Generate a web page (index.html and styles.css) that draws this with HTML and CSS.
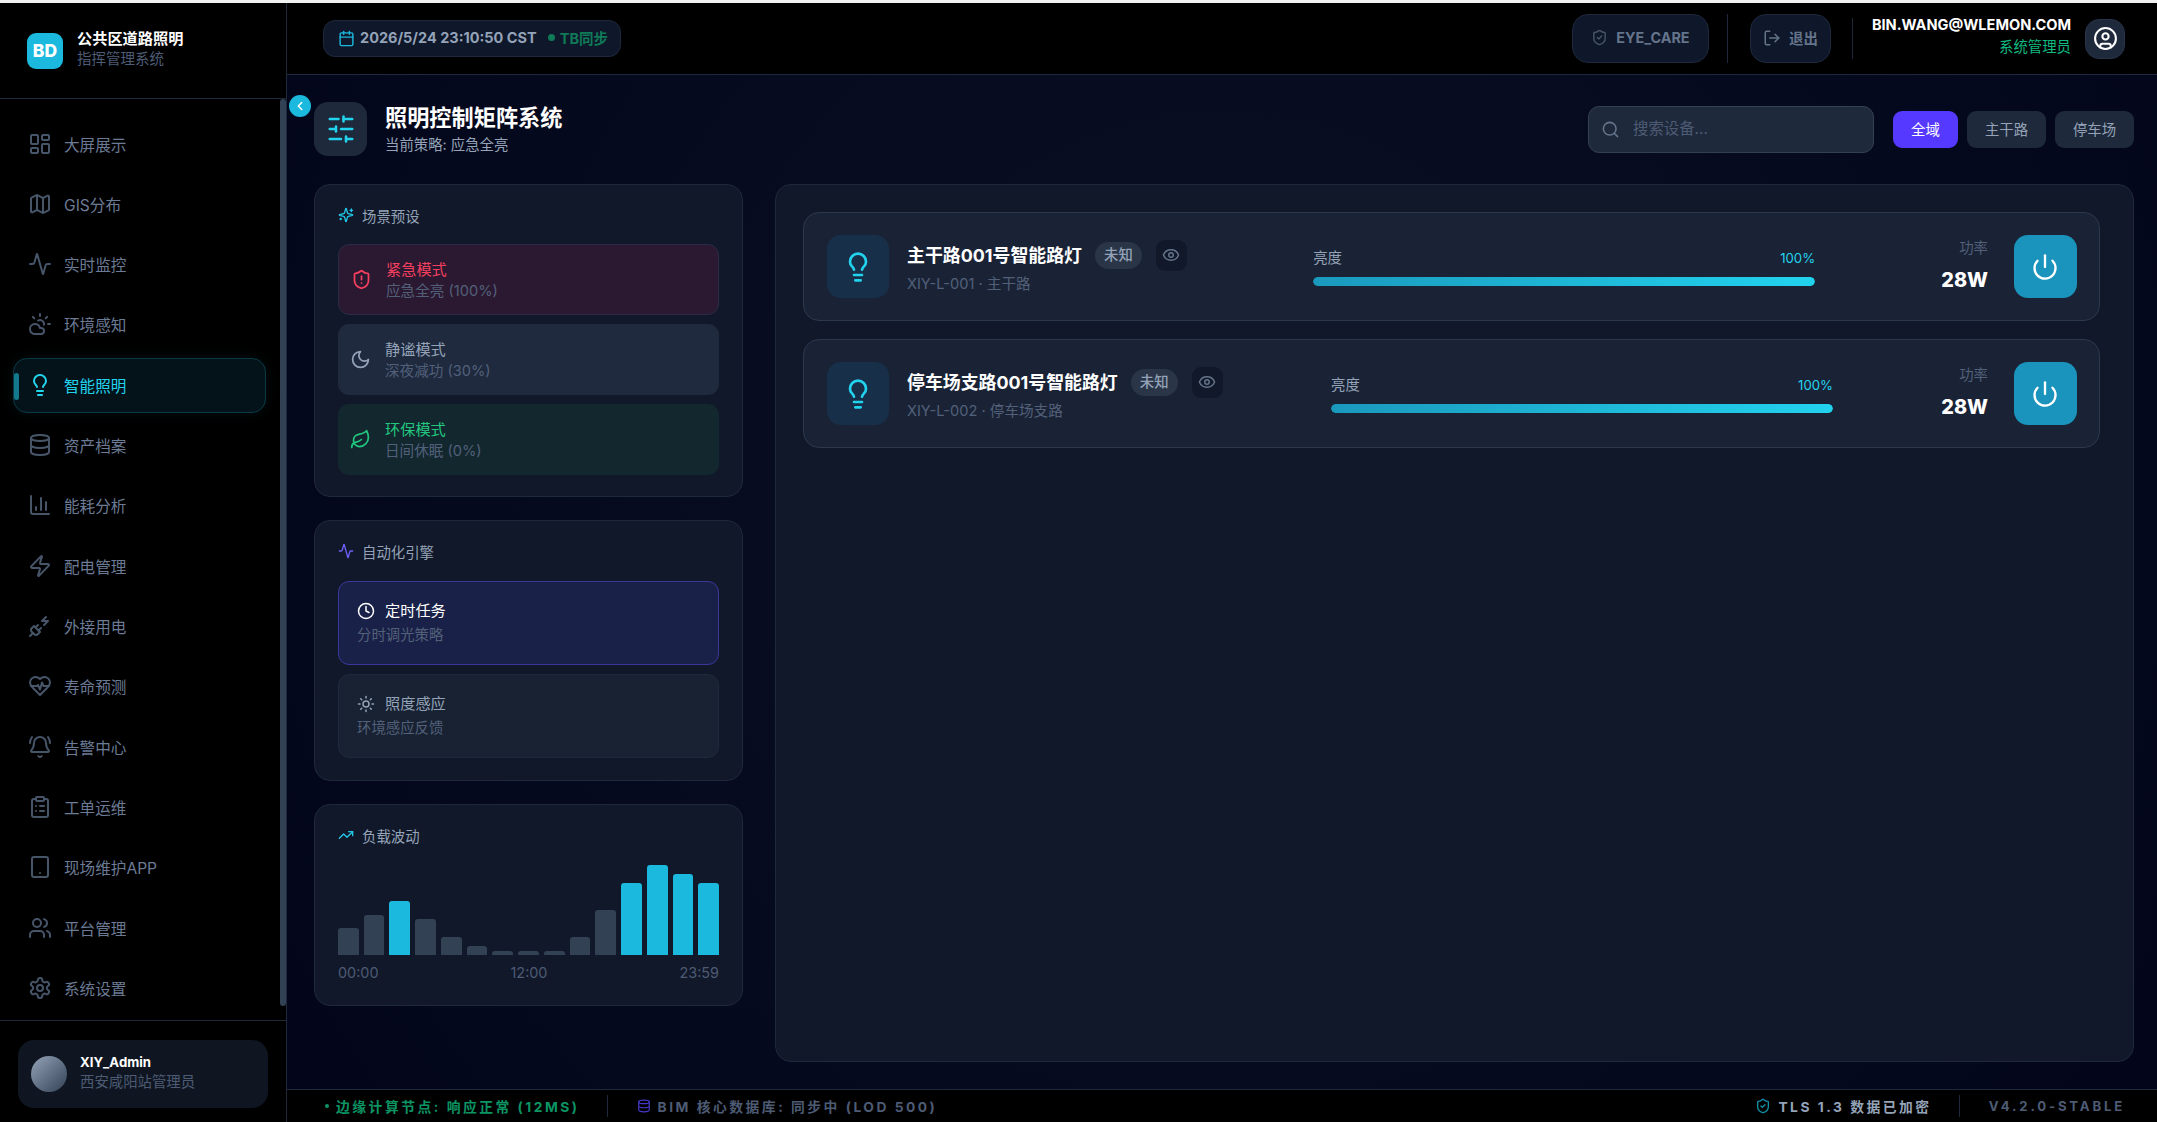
FILE: index.html
```html
<!DOCTYPE html>
<html lang="zh-CN">
<head>
  <meta charset="utf-8"/>
  <meta name="viewport" content="width=device-width, initial-scale=1.0"/>
  <title>公共区道路照明 - 照明控制矩阵系统</title>
  <link rel="stylesheet" href="styles.css">
</head>
<body>
  <svg class="sprite" xmlns="http://www.w3.org/2000/svg">
    <symbol id="i-dashboard" viewBox="0 0 24 24"><rect width="7" height="9" x="3" y="3" rx="1"/><rect width="7" height="5" x="14" y="3" rx="1"/><rect width="7" height="9" x="14" y="12" rx="1"/><rect width="7" height="5" x="3" y="16" rx="1"/></symbol>
    <symbol id="i-map" viewBox="0 0 24 24"><path d="M14.106 5.553a2 2 0 0 0 1.788 0l3.659-1.83A1 1 0 0 1 21 4.619v12.764a1 1 0 0 1-.553.894l-4.553 2.277a2 2 0 0 1-1.788 0l-4.212-2.106a2 2 0 0 0-1.788 0l-3.659 1.83A1 1 0 0 1 3 19.381V6.618a1 1 0 0 1 .553-.894l4.553-2.277a2 2 0 0 1 1.788 0z"/><path d="M15 5.764v15"/><path d="M9 3.236v15"/></symbol>
    <symbol id="i-activity" viewBox="0 0 24 24"><path d="M22 12h-2.48a2 2 0 0 0-1.93 1.46l-2.35 8.36a.25.25 0 0 1-.48 0L9.24 2.18a.25.25 0 0 0-.48 0l-2.35 8.36A2 2 0 0 1 4.49 12H2"/></symbol>
    <symbol id="i-cloud-sun" viewBox="0 0 24 24"><path d="M12 2v2"/><path d="m4.93 4.93 1.41 1.41"/><path d="M20 12h2"/><path d="m19.07 4.93-1.41 1.41"/><path d="M15.947 12.65a4 4 0 0 0-5.925-4.128"/><path d="M13 22H7a5 5 0 1 1 4.9-6H13a3 3 0 0 1 0 6Z"/></symbol>
    <symbol id="i-bulb" viewBox="0 0 24 24"><path d="M15 14c.2-1 .7-1.7 1.5-2.5 1-.9 1.5-2.2 1.5-3.5A6 6 0 0 0 6 8c0 1 .2 2.2 1.5 3.5.7.7 1.3 1.5 1.5 2.5"/><path d="M9 18h6"/><path d="M10 22h4"/></symbol>
    <symbol id="i-database" viewBox="0 0 24 24"><ellipse cx="12" cy="5" rx="9" ry="3"/><path d="M3 5V19A9 3 0 0 0 21 19V5"/><path d="M3 12A9 3 0 0 0 21 12"/></symbol>
    <symbol id="i-chart" viewBox="0 0 24 24"><path d="M3 3v16a2 2 0 0 0 2 2h16"/><path d="M18 17V9"/><path d="M13 17V5"/><path d="M8 17v-3"/></symbol>
    <symbol id="i-zap" viewBox="0 0 24 24"><path d="M4 14a1 1 0 0 1-.78-1.63l9.9-10.2a.5.5 0 0 1 .86.46l-1.92 6.02A1 1 0 0 0 13 10h7a1 1 0 0 1 .78 1.63l-9.9 10.2a.5.5 0 0 1-.86-.46l1.92-6.02A1 1 0 0 0 11 14z"/></symbol>
    <symbol id="i-plug" viewBox="0 0 24 24"><path d="M6.3 20.3a2.4 2.4 0 0 0 3.4 0L12 18l-6-6-2.3 2.3a2.4 2.4 0 0 0 0 3.4Z"/><path d="m2 22 3-3"/><path d="M7.5 13.5 10 11"/><path d="M10.5 16.5 13 14"/><path d="m18 3-4 4h6l-4 4"/></symbol>
    <symbol id="i-heart" viewBox="0 0 24 24"><path d="M19 14c1.49-1.46 3-3.21 3-5.5A5.5 5.5 0 0 0 16.5 3c-1.76 0-3 .5-4.5 2-1.5-1.5-2.74-2-4.5-2A5.5 5.5 0 0 0 2 8.5c0 2.3 1.5 4.05 3 5.5l7 7Z"/><path d="M3.22 12H9.5l.5-1 2 4.5 2-7 1.5 3.5h5.27"/></symbol>
    <symbol id="i-bell" viewBox="0 0 24 24"><path d="M10.268 21a2 2 0 0 0 3.464 0"/><path d="M22 8c0-2.3-.8-4.3-2-6"/><path d="M3.262 15.326A1 1 0 0 0 4 17h16a1 1 0 0 0 .74-1.673C19.41 13.956 18 12.499 18 8A6 6 0 0 0 6 8c0 4.499-1.411 5.956-2.738 7.326"/><path d="M4 2C2.8 3.7 2 5.7 2 8"/></symbol>
    <symbol id="i-clipboard" viewBox="0 0 24 24"><rect width="8" height="4" x="8" y="2" rx="1" ry="1"/><path d="M16 4h2a2 2 0 0 1 2 2v14a2 2 0 0 1-2 2H6a2 2 0 0 1-2-2V6a2 2 0 0 1 2-2h2"/><path d="M12 11h4"/><path d="M12 16h4"/><path d="M8 11h.01"/><path d="M8 16h.01"/></symbol>
    <symbol id="i-tablet" viewBox="0 0 24 24"><rect width="16" height="20" x="4" y="2" rx="2" ry="2"/><line x1="12" x2="12.01" y1="18" y2="18"/></symbol>
    <symbol id="i-users" viewBox="0 0 24 24"><path d="M16 21v-2a4 4 0 0 0-4-4H6a4 4 0 0 0-4 4v2"/><circle cx="9" cy="7" r="4"/><path d="M22 21v-2a4 4 0 0 0-3-3.87"/><path d="M16 3.13a4 4 0 0 1 0 7.75"/></symbol>
    <symbol id="i-settings" viewBox="0 0 24 24"><path d="M12.22 2h-.44a2 2 0 0 0-2 2v.18a2 2 0 0 1-1 1.73l-.43.25a2 2 0 0 1-2 0l-.15-.08a2 2 0 0 0-2.73.73l-.22.38a2 2 0 0 0 .73 2.73l.15.1a2 2 0 0 1 1 1.72v.51a2 2 0 0 1-1 1.74l-.15.09a2 2 0 0 0-.73 2.73l.22.38a2 2 0 0 0 2.73.73l.15-.08a2 2 0 0 1 2 0l.43.25a2 2 0 0 1 1 1.73V20a2 2 0 0 0 2 2h.44a2 2 0 0 0 2-2v-.18a2 2 0 0 1 1-1.73l.43-.25a2 2 0 0 1 2 0l.15.08a2 2 0 0 0 2.73-.73l.22-.39a2 2 0 0 0-.73-2.73l-.15-.08a2 2 0 0 1-1-1.74v-.5a2 2 0 0 1 1-1.74l.15-.09a2 2 0 0 0 .73-2.73l-.22-.38a2 2 0 0 0-2.73-.73l-.15.08a2 2 0 0 1-2 0l-.43-.25a2 2 0 0 1-1-1.73V4a2 2 0 0 0-2-2z"/><circle cx="12" cy="12" r="3"/></symbol>
    <symbol id="i-calendar" viewBox="0 0 24 24"><path d="M8 2v4"/><path d="M16 2v4"/><rect width="18" height="18" x="3" y="4" rx="2"/><path d="M3 10h18"/></symbol>
    <symbol id="i-shield-check" viewBox="0 0 24 24"><path d="M20 13c0 5-3.5 7.5-7.66 8.95a1 1 0 0 1-.67-.01C7.5 20.5 4 18 4 13V6a1 1 0 0 1 1-1c2 0 4.5-1.2 6.24-2.72a1.17 1.17 0 0 1 1.52 0C14.51 3.81 17 5 19 5a1 1 0 0 1 1 1z"/><path d="m9 12 2 2 4-4"/></symbol>
    <symbol id="i-shield-alert" viewBox="0 0 24 24"><path d="M20 13c0 5-3.5 7.5-7.66 8.95a1 1 0 0 1-.67-.01C7.5 20.5 4 18 4 13V6a1 1 0 0 1 1-1c2 0 4.5-1.2 6.24-2.72a1.17 1.17 0 0 1 1.52 0C14.51 3.81 17 5 19 5a1 1 0 0 1 1 1z"/><path d="M12 8v4"/><path d="M12 16h.01"/></symbol>
    <symbol id="i-logout" viewBox="0 0 24 24"><path d="M9 21H5a2 2 0 0 1-2-2V5a2 2 0 0 1 2-2h4"/><polyline points="16 17 21 12 16 7"/><line x1="21" x2="9" y1="12" y2="12"/></symbol>
    <symbol id="i-user" viewBox="0 0 24 24"><circle cx="12" cy="12" r="10"/><circle cx="12" cy="10" r="3"/><path d="M7 20.662V19a2 2 0 0 1 2-2h6a2 2 0 0 1 2 2v1.662"/></symbol>
    <symbol id="i-chevron" viewBox="0 0 24 24"><path d="m15 18-6-6 6-6"/></symbol>
    <symbol id="i-sliders" viewBox="0 0 24 24"><line x1="21" x2="14" y1="4" y2="4"/><line x1="10" x2="3" y1="4" y2="4"/><line x1="21" x2="12" y1="12" y2="12"/><line x1="8" x2="3" y1="12" y2="12"/><line x1="21" x2="16" y1="20" y2="20"/><line x1="12" x2="3" y1="20" y2="20"/><line x1="14" x2="14" y1="2" y2="6"/><line x1="8" x2="8" y1="10" y2="14"/><line x1="16" x2="16" y1="18" y2="22"/></symbol>
    <symbol id="i-sparkles" viewBox="0 0 24 24"><path d="M9.937 15.5A2 2 0 0 0 8.5 14.063l-6.135-1.582a.5.5 0 0 1 0-.962L8.5 9.936A2 2 0 0 0 9.937 8.5l1.582-6.135a.5.5 0 0 1 .963 0L14.063 8.5A2 2 0 0 0 15.5 9.937l6.135 1.581a.5.5 0 0 1 0 .964L15.5 14.063a2 2 0 0 0-1.437 1.437l-1.582 6.135a.5.5 0 0 1-.963 0z"/><path d="M20 3v4"/><path d="M22 5h-4"/><path d="M4 17v2"/><path d="M5 18H3"/></symbol>
    <symbol id="i-moon" viewBox="0 0 24 24"><path d="M12 3a6 6 0 0 0 9 9 9 9 0 1 1-9-9Z"/></symbol>
    <symbol id="i-leaf" viewBox="0 0 24 24"><path d="M11 20A7 7 0 0 1 9.8 6.1C15.5 5 17 4.48 19 2c1 2 2 4.18 2 8 0 5.5-4.78 10-10 10Z"/><path d="M2 21c0-3 1.85-5.36 5.08-6C9.5 14.52 12 13 13 12"/></symbol>
    <symbol id="i-clock" viewBox="0 0 24 24"><circle cx="12" cy="12" r="10"/><polyline points="12 6 12 12 16 14"/></symbol>
    <symbol id="i-sun" viewBox="0 0 24 24"><circle cx="12" cy="12" r="4"/><path d="M12 2v2"/><path d="M12 20v2"/><path d="m4.93 4.93 1.41 1.41"/><path d="m17.66 17.66 1.41 1.41"/><path d="M2 12h2"/><path d="M20 12h2"/><path d="m6.34 17.66-1.41 1.41"/><path d="m19.07 4.93-1.41 1.41"/></symbol>
    <symbol id="i-trend" viewBox="0 0 24 24"><polyline points="22 7 13.5 15.5 8.5 10.5 2 17"/><polyline points="16 7 22 7 22 13"/></symbol>
    <symbol id="i-search" viewBox="0 0 24 24"><circle cx="11" cy="11" r="8"/><path d="m21 21-4.3-4.3"/></symbol>
    <symbol id="i-eye" viewBox="0 0 24 24"><path d="M2.062 12.348a1 1 0 0 1 0-.696 10.75 10.75 0 0 1 19.876 0 1 1 0 0 1 0 .696 10.75 10.75 0 0 1-19.876 0"/><circle cx="12" cy="12" r="3"/></symbol>
    <symbol id="i-power" viewBox="0 0 24 24"><path d="M12 2v10"/><path d="M18.4 6.6a9 9 0 1 1-12.77.04"/></symbol>
  </svg>

  <div class="app">
    <aside class="sidebar">
      <div class="brand">
        <div class="brand-logo">BD</div>
        <div class="brand-text">
          <div class="brand-title">公共区道路照明</div>
          <div class="brand-sub">指挥管理系统</div>
        </div>
      </div>

      <nav class="nav">
        <a class="nav-item"><svg class="icon"><use href="#i-dashboard"/></svg>大屏展示</a>
        <a class="nav-item"><svg class="icon"><use href="#i-map"/></svg>GIS分布</a>
        <a class="nav-item"><svg class="icon"><use href="#i-activity"/></svg>实时监控</a>
        <a class="nav-item"><svg class="icon"><use href="#i-cloud-sun"/></svg>环境感知</a>
        <a class="nav-item active"><svg class="icon"><use href="#i-bulb"/></svg>智能照明</a>
        <a class="nav-item"><svg class="icon"><use href="#i-database"/></svg>资产档案</a>
        <a class="nav-item"><svg class="icon"><use href="#i-chart"/></svg>能耗分析</a>
        <a class="nav-item"><svg class="icon"><use href="#i-zap"/></svg>配电管理</a>
        <a class="nav-item"><svg class="icon"><use href="#i-plug"/></svg>外接用电</a>
        <a class="nav-item"><svg class="icon"><use href="#i-heart"/></svg>寿命预测</a>
        <a class="nav-item"><svg class="icon"><use href="#i-bell"/></svg>告警中心</a>
        <a class="nav-item"><svg class="icon"><use href="#i-clipboard"/></svg>工单运维</a>
        <a class="nav-item"><svg class="icon"><use href="#i-tablet"/></svg>现场维护APP</a>
        <a class="nav-item"><svg class="icon"><use href="#i-users"/></svg>平台管理</a>
        <a class="nav-item"><svg class="icon"><use href="#i-settings"/></svg>系统设置</a>
        <div class="nav-thumb"></div>
      </nav>

      <div class="side-foot">
        <div class="user-card">
          <div class="user-avatar"></div>
          <div>
            <div class="user-name">XIY_Admin</div>
            <div class="user-role">西安咸阳站管理员</div>
          </div>
        </div>
      </div>
    </aside>

    <div class="main">
      <header class="topbar">
        <div class="clock-pill">
          <svg class="icon clock-icon"><use href="#i-calendar"/></svg>
          <span class="clock-time">2026/5/24 23:10:50 CST</span>
          <span class="clock-sync"><i class="dot"></i>TB同步</span>
        </div>
        <div class="top-actions">
          <button class="top-btn eye-btn"><svg class="icon"><use href="#i-shield-check"/></svg>EYE_CARE</button>
          <span class="vline tall"></span>
          <button class="top-btn exit-btn"><svg class="icon"><use href="#i-logout"/></svg>退出</button>
          <span class="vline"></span>
          <div class="who">
            <div class="who-mail">BIN.WANG@WLEMON.COM</div>
            <div class="who-role">系统管理员</div>
          </div>
          <div class="who-btn"><svg class="icon"><use href="#i-user"/></svg></div>
        </div>
      </header>

      <main class="content">
        <button class="collapse"><svg class="icon"><use href="#i-chevron"/></svg></button>

        <div class="page-head">
          <div class="page-title-wrap">
            <div class="page-icon"><svg class="icon"><use href="#i-sliders"/></svg></div>
            <div>
              <h1 class="page-title">照明控制矩阵系统</h1>
              <p class="page-sub">当前策略: 应急全亮</p>
            </div>
          </div>
          <div class="page-tools">
            <label class="search">
              <svg class="icon"><use href="#i-search"/></svg>
              <input type="text" placeholder="搜索设备...">
            </label>
            <button class="chip on">全域</button>
            <button class="chip">主干路</button>
            <button class="chip">停车场</button>
          </div>
        </div>

        <div class="columns">
          <div class="left-col">
            <section class="card scenes">
              <h3 class="card-title"><svg class="icon cyan"><use href="#i-sparkles"/></svg>场景预设</h3>
              <div class="scene red">
                <svg class="icon"><use href="#i-shield-alert"/></svg>
                <div><div class="scene-name">紧急模式</div><div class="scene-desc">应急全亮 (100%)</div></div>
              </div>
              <div class="scene grey">
                <svg class="icon"><use href="#i-moon"/></svg>
                <div><div class="scene-name">静谧模式</div><div class="scene-desc">深夜减功 (30%)</div></div>
              </div>
              <div class="scene green">
                <svg class="icon"><use href="#i-leaf"/></svg>
                <div><div class="scene-name">环保模式</div><div class="scene-desc">日间休眠 (0%)</div></div>
              </div>
            </section>

            <section class="card autos">
              <h3 class="card-title"><svg class="icon violet"><use href="#i-activity"/></svg>自动化引擎</h3>
              <div class="auto on">
                <div class="auto-name"><svg class="icon"><use href="#i-clock"/></svg>定时任务</div>
                <div class="auto-desc">分时调光策略</div>
              </div>
              <div class="auto">
                <div class="auto-name"><svg class="icon"><use href="#i-sun"/></svg>照度感应</div>
                <div class="auto-desc">环境感应反馈</div>
              </div>
            </section>

            <section class="card load">
              <h3 class="card-title"><svg class="icon cyan"><use href="#i-trend"/></svg>负载波动</h3>
              <div class="bars">
                <span class="bar" style="height:27px"></span>
                <span class="bar" style="height:40px"></span>
                <span class="bar hot" style="height:54px"></span>
                <span class="bar" style="height:36px"></span>
                <span class="bar" style="height:18px"></span>
                <span class="bar" style="height:9px"></span>
                <span class="bar" style="height:4px"></span>
                <span class="bar" style="height:4px"></span>
                <span class="bar" style="height:4px"></span>
                <span class="bar" style="height:18px"></span>
                <span class="bar" style="height:45px"></span>
                <span class="bar hot" style="height:72px"></span>
                <span class="bar hot" style="height:90px"></span>
                <span class="bar hot" style="height:81px"></span>
                <span class="bar hot" style="height:72px"></span>
              </div>
              <div class="axis"><span>00:00</span><span>12:00</span><span>23:59</span></div>
            </section>
          </div>

          <section class="panel">
            <article class="device">
              <div class="dev-left">
                <div class="dev-icon"><svg class="icon"><use href="#i-bulb"/></svg></div>
                <div>
                  <div class="dev-head">
                    <span class="dev-name">主干路001号智能路灯</span>
                    <span class="badge">未知</span>
                    <span class="eye"><svg class="icon"><use href="#i-eye"/></svg></span>
                  </div>
                  <div class="dev-id">XIY-L-001 · 主干路</div>
                </div>
              </div>
              <div class="dev-level">
                <div class="level-top"><span>亮度</span><span class="pct">100%</span></div>
                <div class="track"><div class="fill" style="width:100%"></div></div>
              </div>
              <div class="dev-right">
                <div class="power-read"><div class="power-label">功率</div><div class="power-val">28W</div></div>
                <button class="power-btn"><svg class="icon"><use href="#i-power"/></svg></button>
              </div>
            </article>

            <article class="device">
              <div class="dev-left">
                <div class="dev-icon"><svg class="icon"><use href="#i-bulb"/></svg></div>
                <div>
                  <div class="dev-head">
                    <span class="dev-name">停车场支路001号智能路灯</span>
                    <span class="badge">未知</span>
                    <span class="eye"><svg class="icon"><use href="#i-eye"/></svg></span>
                  </div>
                  <div class="dev-id">XIY-L-002 · 停车场支路</div>
                </div>
              </div>
              <div class="dev-level">
                <div class="level-top"><span>亮度</span><span class="pct">100%</span></div>
                <div class="track"><div class="fill" style="width:100%"></div></div>
              </div>
              <div class="dev-right">
                <div class="power-read"><div class="power-label">功率</div><div class="power-val">28W</div></div>
                <button class="power-btn"><svg class="icon"><use href="#i-power"/></svg></button>
              </div>
            </article>
          </section>
        </div>
      </main>

      <footer class="statusbar">
        <div class="status-group">
          <span class="st st-green"><i class="dot"></i>边缘计算节点: 响应正常 (12MS)</span>
          <span class="st-line"></span>
          <span class="st st-slate"><svg class="icon"><use href="#i-database"/></svg>BIM 核心数据库: 同步中 (LOD 500)</span>
        </div>
        <div class="status-group">
          <span class="st st-light"><svg class="icon"><use href="#i-shield-check"/></svg>TLS 1.3 数据已加密</span>
          <span class="st-line"></span>
          <span class="st st-ver">V4.2.0-STABLE</span>
        </div>
      </footer>
    </div>
  </div>
</body>
</html>
```

FILE: styles.css
```css
* {
  box-sizing: border-box;
}
html, body {
  height: 100%;
}
body {
  margin: 0;
  padding-top: 3px;
  background: #f1f1f1;
  color: #94a3b8;
  font-family: Inter, "Noto Sans CJK SC", "Noto Sans", sans-serif;
  font-size: 14.4px;
  overflow: hidden;
}
button {
  font-family: inherit;
  border: 0;
  padding: 0;
}
h1, h3, p {
  margin: 0;
}
.sprite {
  display: none;
}
.icon {
  width: 24px;
  height: 24px;
  flex: none;
  fill: none;
  stroke: currentColor;
  stroke-width: 2;
  stroke-linecap: round;
  stroke-linejoin: round;
}
.dot {
  display: inline-block;
  border-radius: 50%;
  background: currentColor;
}
.app {
  display: flex;
  height: 100%;
  background: #000;
}

/* SIDEBAR */
.sidebar {
  width: 287px;
  flex: none;
  display: flex;
  flex-direction: column;
  background: #000;
  border-right: 1px solid #1e293b;
}
.brand {
  height: 96px;
  flex: none;
  display: flex;
  align-items: center;
  gap: 14px;
  padding: 0 0 0 27px;
  border-bottom: 1px solid #1e293b;
}
.brand-text {
  margin-bottom: 3px;
}
.brand-logo {
  width: 36px;
  height: 36px;
  border-radius: 9px;
  background: #1bb9dd;
  color: #fff;
  font-size: 17.5px;
  font-weight: 800;
  line-height: 36px;
  text-align: center;
}
.brand-title {
  color: #fff;
  font-size: 15.2px;
  font-weight: 700;
  line-height: 20px;
}
.brand-sub {
  color: #4d5b74;
  font-size: 14.5px;
  line-height: 20px;
}
.nav {
  position: relative;
  flex: 1;
  display: flex;
  flex-direction: column;
  gap: 5.32px;
  padding: 18px 20px 0 13px;
}
.nav-item {
  height: 55px;
  flex: none;
  display: flex;
  align-items: center;
  gap: 12px;
  padding: 0 0 2px 14px;
  border-radius: 14px;
  border: 1px solid transparent;
  color: #6b7b95;
  font-size: 15.6px;
  position: relative;
}
.nav-item .icon {
  color: #475569;
}
.nav-item.active {
  background: #04131a;
  border-color: #0b3a47;
  color: #22d3ee;
  box-shadow: 0 0 12px rgba(34, 211, 238, 0.08);
}
.nav-item.active .icon {
  color: #22d3ee;
}
.nav-item.active::before {
  content: "";
  position: absolute;
  left: 0;
  top: 14px;
  width: 5px;
  height: 27px;
  border-radius: 3px;
  background: #14798c;
}
.nav-thumb {
  position: absolute;
  right: 0;
  top: 0;
  width: 6px;
  height: 907px;
  border-radius: 3px;
  background: #334155;
}
.side-foot {
  flex: none;
  height: 102px;
  border-top: 1px solid #1e293b;
  padding: 19px 18px 0;
}
.user-card {
  height: 68px;
  display: flex;
  align-items: center;
  gap: 13px;
  padding: 0 0 3px 13px;
  background: #0f1621;
  border-radius: 16px;
}
.user-avatar {
  width: 36px;
  height: 36px;
  margin-top: 3px;
  border-radius: 50%;
  background: linear-gradient(135deg, #94a3b8, #334155);
}
.user-name {
  color: #fff;
  font-size: 13.2px;
  font-weight: 700;
  line-height: 19px;
}
.user-role {
  color: #4d5b74;
  font-size: 14.4px;
  line-height: 20px;
}

/* TOP BAR */
.main {
  flex: 1;
  min-width: 0;
  display: flex;
  flex-direction: column;
}
.topbar {
  height: 72px;
  flex: none;
  display: flex;
  align-items: flex-start;
  justify-content: space-between;
  padding: 11px 32px 0 36px;
  background: #000;
  border-bottom: 1px solid #1e293b;
}
.clock-pill {
  margin-top: 6px;
  width: 298px;
  height: 37px;
  display: flex;
  align-items: center;
  padding: 0 0 2px 14px;
  background: #0f172a;
  border: 1px solid #1e293b;
  border-radius: 12px;
  font-weight: 700;
}
.clock-icon {
  width: 17px;
  height: 17px;
  margin: 2px 5px 0 0;
  color: #1bb9dd;
}
.clock-time {
  color: #94a3b8;
  font-size: 14.5px;
  white-space: nowrap;
}
.clock-sync {
  margin-left: 11px;
  color: #0f7a57;
  font-size: 14.5px;
  display: flex;
  align-items: center;
  white-space: nowrap;
}
.clock-sync .dot {
  width: 7px;
  height: 7px;
  margin-right: 5px;
}
.top-actions {
  display: flex;
  align-items: center;
}
.top-btn {
  height: 49px;
  display: flex;
  align-items: center;
  justify-content: center;
  gap: 8px;
  padding-bottom: 2px;
  background: #0f172a;
  border: 1px solid #1e293b;
  border-radius: 16px;
  color: #64748b;
  font-size: 14.4px;
  font-weight: 700;
}
.eye-btn {
  width: 137px;
}
.eye-btn .icon {
  width: 17px;
  height: 17px;
  color: #475569;
}
.exit-btn {
  width: 81px;
}
.exit-btn .icon {
  width: 18px;
  height: 18px;
  color: #64748b;
}
.vline {
  width: 1px;
  height: 41px;
  margin: 0 19px 0 21px;
  background: #1e293b;
}
.vline.tall {
  height: 49px;
  margin: 0 22px 0 18px;
}
.who {
  text-align: right;
  margin: 0 14px 3px 0;
}
.who-mail {
  color: #fff;
  font-size: 14.55px;
  font-weight: 700;
  line-height: 20px;
}
.who-role {
  color: #10b981;
  font-size: 14.4px;
  line-height: 24px;
}
.who-btn {
  width: 40px;
  height: 40px;
  display: flex;
  align-items: center;
  justify-content: center;
  background: #1e293b;
  border: 1px solid #27344a;
  border-radius: 14px;
  color: #fff;
}
.who-btn .icon {
  width: 25px;
  height: 25px;
}

/* CONTENT */
.content {
  position: relative;
  flex: 1;
  min-height: 0;
  display: flex;
  flex-direction: column;
  padding: 27px 23px 27px 27px;
  background: radial-gradient(circle at 50% 40%, #0a1024 0%, #03061a 100%);
}
.collapse {
  position: absolute;
  left: 2px;
  top: 20px;
  width: 22px;
  height: 22px;
  display: flex;
  align-items: center;
  justify-content: center;
  border-radius: 50%;
  background: #1bb9dd;
  color: #fff;
}
.collapse .icon {
  width: 14px;
  height: 14px;
  stroke-width: 2.6;
}
.page-head {
  height: 54px;
  flex: none;
  display: flex;
  align-items: center;
  justify-content: space-between;
  margin-bottom: 28px;
}
.page-title-wrap {
  display: flex;
  align-items: center;
  gap: 18px;
}
.page-icon {
  width: 53px;
  height: 54px;
  display: flex;
  align-items: center;
  justify-content: center;
  background: #1e293b;
  border-radius: 14px;
  color: #22d3ee;
}
.page-icon .icon {
  width: 30px;
  height: 30px;
}
.page-title {
  color: #fff;
  font-size: 22.2px;
  font-weight: 700;
  line-height: 30px;
}
.page-sub {
  margin-top: 1px;
  color: #94a3b8;
  font-size: 14.4px;
  line-height: 21px;
}
.page-tools {
  display: flex;
  align-items: center;
  gap: 9px;
}
.search {
  width: 286px;
  height: 47px;
  display: flex;
  align-items: center;
  gap: 10px;
  margin-right: 10px;
  padding-left: 12px;
  background: #1e293b;
  border: 1px solid #334155;
  border-radius: 11px;
  color: #64748b;
}
.search .icon {
  width: 19px;
  height: 19px;
}
.search input {
  flex: 1;
  min-width: 0;
  padding: 0 0 2px 3px;
  border: 0;
  outline: 0;
  background: transparent;
  color: #fff;
  font-family: inherit;
  font-size: 15.4px;
}
.search input::placeholder {
  color: #4d5b74;
  opacity: 1;
}
.chip {
  height: 37px;
  width: 79px;
  padding-bottom: 2px;
  background: #1e293b;
  border-radius: 9px;
  color: #94a3b8;
  font-size: 14.4px;
}
.chip.on {
  width: 65px;
  background: #5539ff;
  color: #fff;
}
.columns {
  flex: 1;
  min-height: 0;
  display: flex;
  gap: 32px;
}
.left-col {
  width: 429px;
  flex: none;
  display: flex;
  flex-direction: column;
  gap: 23px;
}
.card {
  padding: 20px 23px 0;
  background: #111829;
  border: 1px solid #1e293b;
  border-radius: 16px;
}
.card-title {
  display: flex;
  align-items: center;
  gap: 8px;
  height: 20px;
  color: #94a3b8;
  font-size: 14.4px;
  font-weight: 400;
}
.card-title .icon {
  width: 16px;
  height: 16px;
}
.cyan {
  color: #22c7e8;
}
.violet {
  color: #6d5ef5;
}

/* SCENES */
.scenes {
  height: 313px;
}
.scenes .card-title {
  margin-bottom: 19px;
}
.scene {
  height: 71px;
  margin-bottom: 9px;
  display: flex;
  align-items: center;
  gap: 14px;
  padding-left: 12px;
  border-radius: 11px;
}
.scene .icon {
  width: 21px;
  height: 21px;
}
.scene-name {
  font-size: 15.2px;
  line-height: 22px;
}
.scene-desc {
  color: #526079;
  font-size: 14.6px;
  line-height: 20px;
}
.scene.red {
  background: #2b1932;
  border: 1px solid #2a2b47;
  color: #f43f5e;
}
.scene.grey {
  background: #1f2a3f;
  color: #94a3b8;
}
.scene.green {
  background: #13272f;
  color: #22c77f;
}

/* AUTOMATION */
.autos {
  height: 261px;
}
.autos .card-title {
  margin-bottom: 20px;
}
.auto {
  height: 84px;
  margin-bottom: 9px;
  padding: 15px 18px 0;
  background: #182233;
  border: 1px solid #1e293b;
  border-radius: 11px;
}
.auto.on {
  background: #1a2148;
  border-color: #3a3799;
}
.auto-name {
  display: flex;
  align-items: center;
  gap: 10px;
  color: #94a3b8;
  font-size: 15.2px;
  line-height: 28px;
}
.auto.on .auto-name {
  color: #fff;
}
.auto-name .icon {
  width: 18px;
  height: 18px;
}
.auto-desc {
  color: #526079;
  font-size: 14.4px;
  line-height: 20px;
}

/* LOAD CHART */
.load {
  height: 202px;
}
.bars {
  height: 90px;
  margin-top: 20px;
  display: flex;
  align-items: flex-end;
  gap: 5px;
}
.bar {
  flex: 1;
  border-radius: 3px 3px 0 0;
  background: #334155;
}
.bar.hot {
  background: #1bb9dd;
}
.axis {
  display: flex;
  justify-content: space-between;
  margin-top: 8px;
  color: #4d5b74;
  font-size: 14.4px;
  line-height: 20px;
}

/* DEVICE PANEL */
.panel {
  flex: 1;
  min-width: 0;
  display: flex;
  flex-direction: column;
  gap: 18px;
  padding: 27px 33px 0 27px;
  background: #111829;
  border: 1px solid #1e293b;
  border-radius: 16px;
}
.device {
  height: 109px;
  flex: none;
  display: flex;
  align-items: center;
  justify-content: space-between;
  padding: 0 22px 0 23px;
  background: #1a2336;
  border: 1px solid #2c384c;
  border-radius: 16px;
}
.dev-left {
  display: flex;
  align-items: center;
  gap: 18px;
}
.dev-icon {
  width: 62px;
  height: 63px;
  display: flex;
  align-items: center;
  justify-content: center;
  background: #172f48;
  border-radius: 14px;
  color: #22d3ee;
}
.dev-icon .icon {
  width: 32px;
  height: 32px;
}
.dev-head {
  display: flex;
  align-items: center;
  height: 31px;
}
.dev-name {
  padding-bottom: 3px;
  color: #fff;
  font-size: 17.9px;
  font-weight: 700;
  margin-right: 13px;
  white-space: nowrap;
}
.badge {
  width: 47px;
  height: 27px;
  margin-right: 14px;
  background: #2a3648;
  border-radius: 14px;
  color: #94a3b8;
  font-size: 14.4px;
  font-weight: 500;
  line-height: 25px;
  text-align: center;
}
.eye {
  width: 31px;
  height: 31px;
  display: flex;
  align-items: center;
  justify-content: center;
  background: #111829;
  border-radius: 9px;
  color: #64748b;
}
.eye .icon {
  width: 18px;
  height: 18px;
}
.dev-id {
  margin-top: 3px;
  color: #526079;
  font-size: 14.6px;
  line-height: 20px;
}
.dev-level {
  width: 502px;
  flex: none;
}
.level-top {
  display: flex;
  justify-content: space-between;
  align-items: center;
  margin-bottom: 8px;
  color: #94a3b8;
  font-size: 14.4px;
  line-height: 22px;
}
.pct {
  color: #22d3ee;
  font-size: 13.2px;
}
.track {
  height: 9px;
  border-radius: 5px;
  background: #0f172a;
  overflow: hidden;
}
.fill {
  height: 100%;
  border-radius: 5px;
  background: linear-gradient(90deg, #1a99bd, #22d3ee);
}
.dev-right {
  display: flex;
  align-items: center;
  gap: 26px;
}
.power-read {
  padding-bottom: 3px;
  text-align: right;
}
.power-label {
  color: #526079;
  font-size: 14.4px;
  line-height: 20px;
}
.power-val {
  margin-top: 10px;
  color: #fff;
  font-size: 19.8px;
  font-weight: 800;
  line-height: 24px;
}
.power-btn {
  width: 63px;
  height: 63px;
  display: flex;
  align-items: center;
  justify-content: center;
  background: #1a94bc;
  border-radius: 14px;
  color: #fff;
}
.power-btn .icon {
  width: 28px;
  height: 28px;
}

/* STATUS BAR */
.statusbar {
  height: 33px;
  flex: none;
  display: flex;
  align-items: center;
  justify-content: space-between;
  padding: 0 32px 0 38px;
  background: #000;
  border-top: 1px solid #1e293b;
}
.status-group {
  display: flex;
  align-items: center;
}
.st {
  display: flex;
  align-items: center;
  font-size: 13.8px;
  font-weight: 700;
  letter-spacing: 2.5px;
  white-space: nowrap;
}
.st-line {
  width: 1px;
  height: 22px;
  margin: 0 29px 0 27px;
  background: #1e293b;
}
.st-green {
  color: #0c9463;
}
.st-green .dot {
  width: 4px;
  height: 4px;
  margin-right: 7px;
}
.st-slate {
  color: #4d5b74;
}
.st-slate .icon {
  width: 14px;
  height: 14px;
  margin-right: 7px;
  color: #4338ca;
}
.st-light {
  color: #94a3b8;
}
.st-light .icon {
  width: 16px;
  height: 16px;
  margin-right: 7px;
  color: #1490a8;
}
.st-ver {
  color: #4d5b74;
  font-size: 13.2px;
  letter-spacing: 2.8px;
}
```
